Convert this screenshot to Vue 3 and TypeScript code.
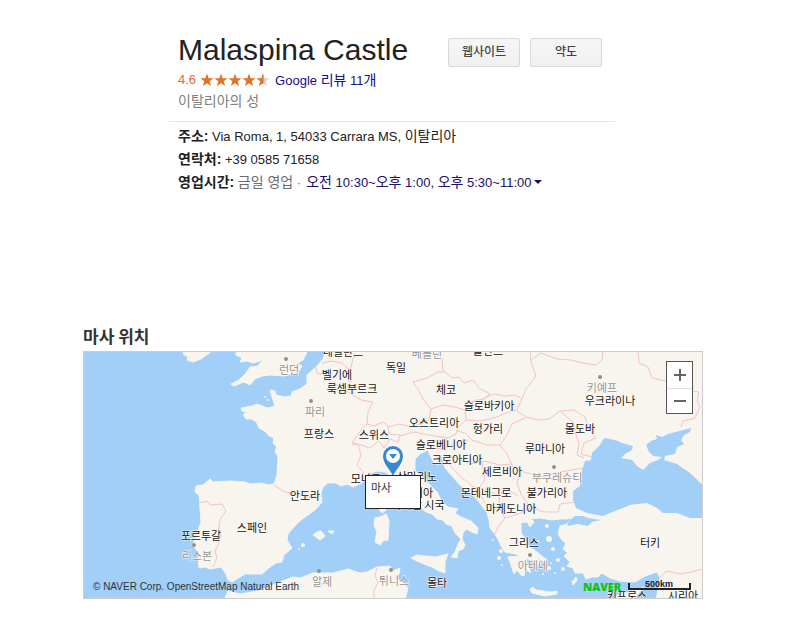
<script setup lang="ts">
import { ref } from 'vue'

interface Label { t: string; x: number; y: number }
interface Dot { x: number; y: number; r: number }

const open = ref(false)

const countries: Label[] = [
  { t: '네덜란드', x: 343, y: 356 },
  { t: '폴란드', x: 488, y: 355 },
  { t: '독일', x: 396, y: 372 },
  { t: '벨기에', x: 337, y: 379 },
  { t: '룩셈부르크', x: 352, y: 393 },
  { t: '체코', x: 446, y: 394 },
  { t: '슬로바키아', x: 489, y: 410 },
  { t: '우크라이나', x: 610, y: 405 },
  { t: '오스트리아', x: 434, y: 427 },
  { t: '헝가리', x: 488, y: 433 },
  { t: '몰도바', x: 580, y: 433 },
  { t: '프랑스', x: 319, y: 438 },
  { t: '스위스', x: 374, y: 439 },
  { t: '슬로베니아', x: 441, y: 449 },
  { t: '루마니아', x: 545, y: 453 },
  { t: '크로아티아', x: 457, y: 464 },
  { t: '세르비아', x: 502, y: 476 },
  { t: '모나코', x: 366, y: 483 },
  { t: '산마리노', x: 417, y: 481 },
  { t: '이탈리아', x: 413, y: 497 },
  { t: '바티칸 시국', x: 418, y: 509 },
  { t: '몬테네그로', x: 486, y: 497 },
  { t: '불가리아', x: 547, y: 497 },
  { t: '마케도니아', x: 511, y: 513 },
  { t: '안도라', x: 305, y: 500 },
  { t: '스페인', x: 252, y: 532 },
  { t: '포르투갈', x: 201, y: 540 },
  { t: '그리스', x: 524, y: 547 },
  { t: '터키', x: 650, y: 547 },
  { t: '몰타', x: 437, y: 587 },
  { t: '키프로스', x: 627, y: 600 },
  { t: '시리아', x: 683, y: 600 },
]

const capitals: Label[] = [
  { t: '런던', x: 289, y: 374 },
  { t: '베를린', x: 427, y: 358 },
  { t: '파리', x: 315, y: 416 },
  { t: '키예프', x: 602, y: 392 },
  { t: '부쿠레슈티', x: 557, y: 482 },
  { t: '리스본', x: 197, y: 560 },
  { t: '아테네', x: 533, y: 570 },
  { t: '알제', x: 322, y: 586 },
  { t: '튀니스', x: 394, y: 585 },
]

const dots: number[][] = [[286, 359], [311, 401], [600, 377], [554, 467], [194, 545], [530, 555], [319, 571], [391, 570]]

const islets: Dot[] = [
  { x: 549, y: 539, r: 3 }, { x: 553, y: 549, r: 2 }, { x: 545, y: 561, r: 2 }, { x: 551, y: 563, r: 1 },
  { x: 549, y: 568, r: 2 }, { x: 558, y: 560, r: 2 }, { x: 563, y: 569, r: 2 }, { x: 547, y: 526, r: 2 },
  { x: 541, y: 558, r: 1 }, { x: 555, y: 573, r: 1 }, { x: 501, y: 551, r: 2 }, { x: 499, y: 558, r: 2 },
  { x: 543, y: 574, r: 1 }, { x: 538, y: 541, r: 1 }, { x: 303, y: 545, r: 2 }, { x: 299, y: 549, r: 1 },
  { x: 265, y: 397, r: 1 }, { x: 268, y: 400, r: 1 }, { x: 502, y: 565, r: 1 }, { x: 493, y: 540, r: 1 },
]

const land: string[] = [
  // continent and Anatolia
  'M326 350L323 359L317 366L307 375L307 384L300 389L292 392L291 396L285 397L276 395L275 391L270 390L272 397L275 406L268 408L262 406L257 404L252 406L241 408L242 411L246 412L243 415L246 419L252 419L257 423L259 428L266 432L268 435L274 438L273 443L277 447L275 451L278 457L277 475L274 484L268 485L262 483L250 484L245 482L230 481L213 482L210 479L203 485L196 486L195 492L199 495L200 508L201 522L196 536L193 545L198 552L199 568L205 567L210 569L221 567L226 574L228 580L232 582L240 577L245 574L262 574L270 567L276 563L282 562L284 555L292 548L287 540L288 534L294 527L301 520L315 510L322 502L321 493L323 487L328 483L336 483L341 486L347 484L353 487L362 483L366 477L370 473L378 471L385 472L393 477L398 482L404 492L410 500L418 505L426 512L432 514L437 519L443 520L446 524L452 526L455 533L461 539L458 544L455 552L451 557L457 558L458 551L463 549L465 545L462 539L463 533L466 529L472 532L477 534L478 528L471 521L461 517L455 513L458 509L448 507L442 502L437 492L432 487L424 479L419 475L415 470L415 459L420 454L428 450L430 455L433 461L438 465L439 460L442 458L445 468L452 476L460 485L468 492L476 498L482 506L487 512L489 520L490 528L495 534L498 539L501 546L505 552L516 554L520 556L508 557L511 565L514 574L517 570L521 575L524 576L525 569L531 573L527 563L526 558L533 561L538 566L540 561L535 554L529 548L525 538L521 533L521 523L527 522L530 527L534 522L531 519L540 518L552 520L560 519L566 519L572 518L567 524L560 526L558 534L562 540L566 543L563 549L568 553L564 556L570 562L567 566L573 568L575 573L583 573L586 579L592 577L598 577L602 573L610 578L620 581L635 582L645 576L657 572L660 578L658 590L656 600L704 600L704 350Z',
  'M184 350L183 354L188 357L187 360L193 362L201 359L208 354L213 350Z',
  'M236 350L236 355L242 358L240 362L247 361L253 363L260 361L263 359L258 366L250 367L246 373L239 380L231 384L234 386L244 382L250 385L255 379L262 376L270 375L284 376L292 374L299 371L302 366L297 363L303 360L308 350Z',
  'M375 518L380 517L386 514L389 520L388 540L383 541L380 545L375 542L377 532L374 525Z',
  'M379 500L386 500L386 510L382 513L378 508Z',
  'M411 558L417 555L425 556L436 557L448 554L445 562L445 573L439 571L432 567L419 562Z',
  'M313 535L317 532L321 531L325 536L320 540L316 537Z',
  'M328 531L334 531L332 534Z',
  'M530 589L533 587L536 590L551 592L557 591L557 594L545 596L532 593Z',
  'M527 545L537 552L543 557L547 560L544 562L533 554Z',
  'M572 582L576 577L577 580L573 585Z',
  'M612 599L620 594L632 592L644 587L637 595L633 600Z',
  'M224 600L228 591L240 594L258 591L280 582L293 577L300 578L313 573L333 573L348 569L360 573L367 572L377 567L390 566L393 571L400 568L399 574L395 578L402 582L408 588L405 600Z',
]

const water: string[] = [
  'M585 461L591 460L592 453L600 445L604 438L610 439L618 441L622 443L633 446L632 450L625 454L621 458L632 460L637 466L643 470L650 463L658 460L662 457L653 456L649 452L646 445L651 441L657 439L656 435L662 437L668 434L691 428L690 432L684 435L681 440L684 444L677 447L675 454L665 456L664 460L677 464L690 473L704 486L704 518L690 518L677 513L663 513L657 508L647 503L637 504L630 505L615 511L603 516L587 513L576 508L573 500L573 491L580 486L582 470Z',
  'M569 521L575 516L583 516L588 518L601 520L592 522L588 526L578 524L567 526Z',
]

const borders: string[] = [
  'M199 503L207 501L210 505L222 504L226 511L220 520L219 528L221 536L218 545L215 551L217 558L213 567',
  'M274 485L285 492L299 494L308 497L321 496',
  'M316 367L317 373L325 375L331 383L341 387L349 393L361 400L373 402L368 412L367 424L361 430L352 443L358 444L361 455L357 465L363 472L363 482',
  'M322 363L331 361L341 363L350 370L349 381L354 394M356 351L353 359L350 370',
  'M367 424L374 426L383 422L388 426L389 434L400 435L398 442L390 439L384 448L379 441L370 448L361 445L352 444',
  'M388 427L399 424L408 426L420 425L429 419L431 409L443 405L455 407L465 410L466 420L458 427L456 434L448 438L434 436L414 432L400 436',
  'M431 409L423 399L418 389L413 382L427 378L438 372L445 372L452 378L459 377L464 383L473 380L479 388L490 394L482 400L475 400L466 409',
  'M436 350L442 359L443 372',
  'M466 409L470 402L484 399L493 394L506 396L515 395L522 399L517 410L506 413L494 418L481 421L466 420',
  'M530 350L531 362L536 376L526 389L522 399',
  'M531 360L541 353L557 359L571 360L583 363L596 365L602 360L603 350',
  'M638 350L639 363L648 367L652 378L666 381L681 389L699 392L697 401L700 407L695 418L683 421L681 427',
  'M517 411L526 417L538 420L549 419L560 411L574 410L585 417L588 428L596 438L584 443L581 454L592 457',
  'M561 412L573 422L576 435L579 443L577 455L584 458',
  'M525 418L512 424L507 435L500 445L487 445L472 440L465 433L457 431',
  'M500 445L507 454L512 465L520 471L543 477L560 472L583 468',
  'M520 471L517 483L521 494L530 507L544 512L558 512L560 504L575 502',
  'M432 448L444 449L454 443L468 440M447 456L457 458L470 464L485 461L500 465L512 464M447 456L451 467L461 477L475 488M482 462L485 479L478 490L485 503M485 489L499 496L505 488L518 496',
  'M499 496L500 509L505 518L499 526L494 535M505 518L518 514L530 508',
  'M377 568L375 575L378 583L374 590L374 600',
  'M660 577L667 571L680 574L691 572L703 569',
]
</script>

<template>
  <main class="page">
    <section class="place">
      <header class="top">
        <div class="intro">
          <h1>Malaspina Castle</h1>
          <p class="rating">
            <span class="score">4.6</span>
            <svg class="stars" viewBox="0 0 70 14" role="img" aria-label="4.6">
              <defs>
                <path id="star" d="M7 .5L8.700 5.200L13.500 5.300L9.700 8.300L11.100 13L7 10.200L2.900 13L4.300 8.300L.5 5.300L5.300 5.200Z" />
                <clipPath id="half"><rect x="0" y="0" width="7.500" height="14" /></clipPath>
              </defs>
              <use v-for="n in 4" :key="n" href="#star" :x="(n - 1) * 14" fill="#dd7428" />
              <g transform="translate(56 0)">
                <use href="#star" fill="#d2d2d2" />
                <use href="#star" fill="#dd7428" clip-path="url(#half)" />
              </g>
            </svg>
            <a href="#reviews">Google <span class="ko">리뷰</span> 11<span class="ko">개</span></a>
          </p>
          <p class="kind"><span class="ko">이탈리아의 성</span></p>
        </div>
        <div class="actions">
          <button type="button">웹사이트</button>
          <button type="button">약도</button>
        </div>
      </header>
      <div class="facts">
        <p><b class="ko">주소:</b> Via Roma, 1, 54033 Carrara MS, <span class="ko">이탈리아</span></p>
        <p><b class="ko">연락처:</b> +39 0585 71658</p>
        <p>
          <b class="ko">영업시간:</b>&nbsp;<span class="today ko">금일 영업</span> <span class="today">·</span>
          <button class="hours" type="button" :aria-expanded="open" @click="open = !open">
            <span class="ko">오전</span> 10:30~<span class="ko">오후</span> 1:00, <span class="ko">오후</span> 5:30~11:00<i class="caret"></i>
          </button>
        </p>
      </div>
    </section>

    <section class="location">
      <h2>마사 위치</h2>
      <div class="map">
        <svg class="chart" viewBox="84 352 618 246" preserveAspectRatio="xMidYMid slice">
          <rect x="0" y="300" width="800" height="350" fill="#a2cff8" />
          <path v-for="d in land" :key="d" :d="d" class="land" />
          <path v-for="d in water" :key="d" :d="d" fill="#a2cff8" />
          <circle v-for="(p, i) in islets" :key="i" :cx="p.x" :cy="p.y" :r="p.r" fill="#f8f4ee" />
          <path v-for="d in borders" :key="d" :d="d" class="border" />
          <circle v-for="p in dots" :key="p[0]" :cx="p[0]" :cy="p[1]" r="2" fill="#958f89" />
          <text v-for="l in capitals" :key="l.t" :x="l.x" :y="l.y" class="label capital">{{ l.t }}</text>
          <text v-for="l in countries" :key="l.t" :x="l.x" :y="l.y" class="label">{{ l.t }}</text>
          <path d="M393 476C390 469 383 464 383 456A10 10 0 0 1 403 456C403 464 396 469 393 476Z" fill="#3a87d0" />
          <circle cx="393" cy="456" r="7" fill="#fff" />
          <path d="M389 454H397L393 459Z" fill="#3a87d0" />
          <text x="583" y="591" class="brand">NAVER</text>
          <text x="659" y="587" class="distance">500km</text>
          <path d="M629 583V589H690V583" fill="none" stroke="#222" stroke-width="2" />
        </svg>
        <div class="popup">마사</div>
        <div class="zoom">
          <button type="button" aria-label="+"><svg viewBox="0 0 12 12"><path d="M0 6H12M6 0V12" /></svg></button>
          <button type="button" aria-label="−"><svg viewBox="0 0 12 12"><path d="M0 6H12" /></svg></button>
        </div>
        <small class="credit">© NAVER Corp. OpenStreetMap Natural Earth</small>
      </div>
    </section>
  </main>
</template>

<style>
body { margin: 0; background: #fff; }
</style>

<style scoped>
.page {
  padding: 32px 91px 30px 83px;
  font: 13px/20px "Liberation Sans", "Noto Sans CJK KR", sans-serif;
  color: #222;
}
h1, h2, p { margin: 0; font-weight: 400; }
button { font-family: inherit; cursor: pointer; }
.ko { font-size: 14px; }
.place { margin: 0 88px 0 86px; }
.top {
  display: flex;
  justify-content: space-between;
  padding: 0 13px 10px 9px;
  border-bottom: 1px solid #e5e5e5;
}
h1 { font-size: 30px; line-height: 36px; white-space: nowrap; }
.rating { display: flex; align-items: center; height: 24px; }
.score { color: #dd6b3c; }
.stars { width: 70px; height: 14px; margin: 0 5px 0 4px; }
a { color: #1a0d8b; text-decoration: none; }
.rating a, .score { line-height: 20px; }
.kind { height: 19px; line-height: 19px; color: #808080; }
.actions { display: flex; gap: 10px; padding-top: 6px; }
.actions button {
  width: 72px;
  height: 29px;
  padding: 0 0 3px;
  border: 1px solid #d8d8d8;
  border-radius: 2px;
  background: linear-gradient(#f6f6f6, #f0f0f0);
  color: #444;
  font: 500 12px/20px "Noto Sans CJK KR", sans-serif;
}
.facts { padding: 3px 0 0 9px; }
.facts p { height: 23px; line-height: 23px; white-space: nowrap; }
.today { color: #6a6a70; }
.hours {
  margin-left: 5px;
  padding: 0;
  border: 0;
  background: none;
  color: #1a0d6b;
  font-size: 13px;
  line-height: 23px;
}
.caret {
  display: inline-block;
  margin-left: 3px;
  vertical-align: 3px;
  border: 4px solid transparent;
  border-top-color: #1a0d6b;
  border-bottom: 0;
}
.location { padding-top: 128px; }
h2 { padding-bottom: 1px; font: bold 17px/28px "Noto Sans CJK KR", sans-serif; color: #333; }
.map {
  position: relative;
  border: 1px solid #ccc;
  overflow: hidden;
}
.chart { display: block; width: 100%; }
.land { fill: #f8f4ee; stroke: #f8f4ee; stroke-width: 1; stroke-linejoin: round; }
.border { fill: none; stroke: #f3c3c9; stroke-width: 1; stroke-linejoin: round; }
.label {
  font: 11px "Noto Sans CJK KR", sans-serif;
  fill: #111;
  text-anchor: middle;
  paint-order: stroke;
  stroke: #fff;
  stroke-width: 1px;
}
.capital { fill: #96928e; }
.brand { font: 800 11px "Open Sans", sans-serif; fill: #0fc20f; }
.distance { font: bold 9px "Liberation Sans", sans-serif; fill: #222; text-anchor: middle; }
.popup {
  position: absolute;
  left: 281px;
  top: 123px;
  box-sizing: border-box;
  width: 56px;
  height: 34px;
  padding: 1px 5px;
  border: 1px solid #222;
  background: #fff;
  color: #333;
  font: 11px/20px "Noto Sans CJK KR", sans-serif;
}
.zoom {
  position: absolute;
  top: 9px;
  right: 9px;
  display: flex;
  flex-direction: column;
  border: 1px solid #555;
  background: #fff;
}
.zoom button {
  display: grid;
  place-items: center;
  width: 25px;
  height: 26px;
  padding: 0;
  border: 0;
  background: #fff;
}
.zoom button + button { height: 25px; border-top: 1px solid #ddd; }
.zoom svg { width: 12px; height: 12px; fill: none; stroke: #666; stroke-width: 2; }
.credit {
  position: absolute;
  left: 9px;
  bottom: 3px;
  font-size: 10px;
  line-height: 16px;
  color: #333;
}
</style>
